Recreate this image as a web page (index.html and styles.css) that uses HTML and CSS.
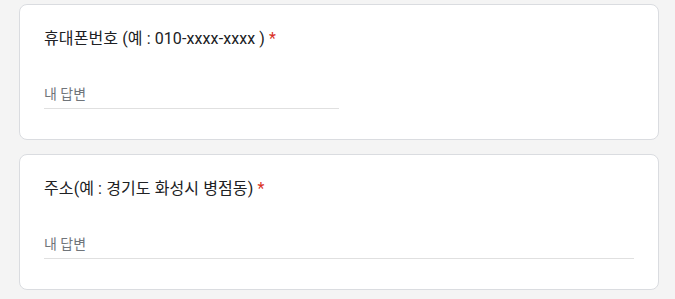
FILE: index.html
```html
<!DOCTYPE html>
<html lang="ko">
  <head>
    <meta charset="utf-8">
    <link rel="stylesheet" href="styles.css">
  </head>
  <body>
    <div class="form">
      <div class="question">
        <div class="question-title">휴대폰번호 (예 : 010-xxxx-xxxx ) <span class="required">*</span></div>
        <input type="text" class="answer answer-short" placeholder="내 답변">
      </div>

      <div class="question">
        <div class="question-title">주소(예 : 경기도 화성시 병점동) <span class="required">*</span></div>
        <input type="text" class="answer" placeholder="내 답변">
      </div>
    </div>
  </body>
</html>
```

FILE: styles.css
```css
/* Общие стили */
body {
  margin: 0;
  background: #f4f4f4;
  font-family: Roboto, "Noto Sans CJK KR", Arial, sans-serif;
  color: #202124;
}

.form {
  display: flex;
  flex-direction: column;
  gap: 14px;
  width: 640px;
  padding: 4px 0 0 19px;
}

.question {
  background: #fff;
  border: 1px solid #dadce0;
  border-radius: 8px;
  padding: 22px 24px 30px;
  display: flex;
  flex-direction: column;
  align-items: flex-start;
}

.question-title {
  font-size: 16px;
  line-height: 24px;
  letter-spacing: 0.1px;
  color: #202124;
}

.required {
  color: #d93025;
}

.answer {
  box-sizing: border-box;
  width: 100%;
  height: 30px;
  margin-top: 28px;
  padding: 0;
  border: none;
  border-bottom: 1px solid #e0e0e0;
  background: transparent;
  font-family: Roboto, "Noto Sans CJK KR", Arial, sans-serif;
  font-size: 14px;
  color: #202124;
  outline: none;
}

.answer::placeholder {
  color: #70757a;
}

.answer-short {
  width: 50%;
}
```
